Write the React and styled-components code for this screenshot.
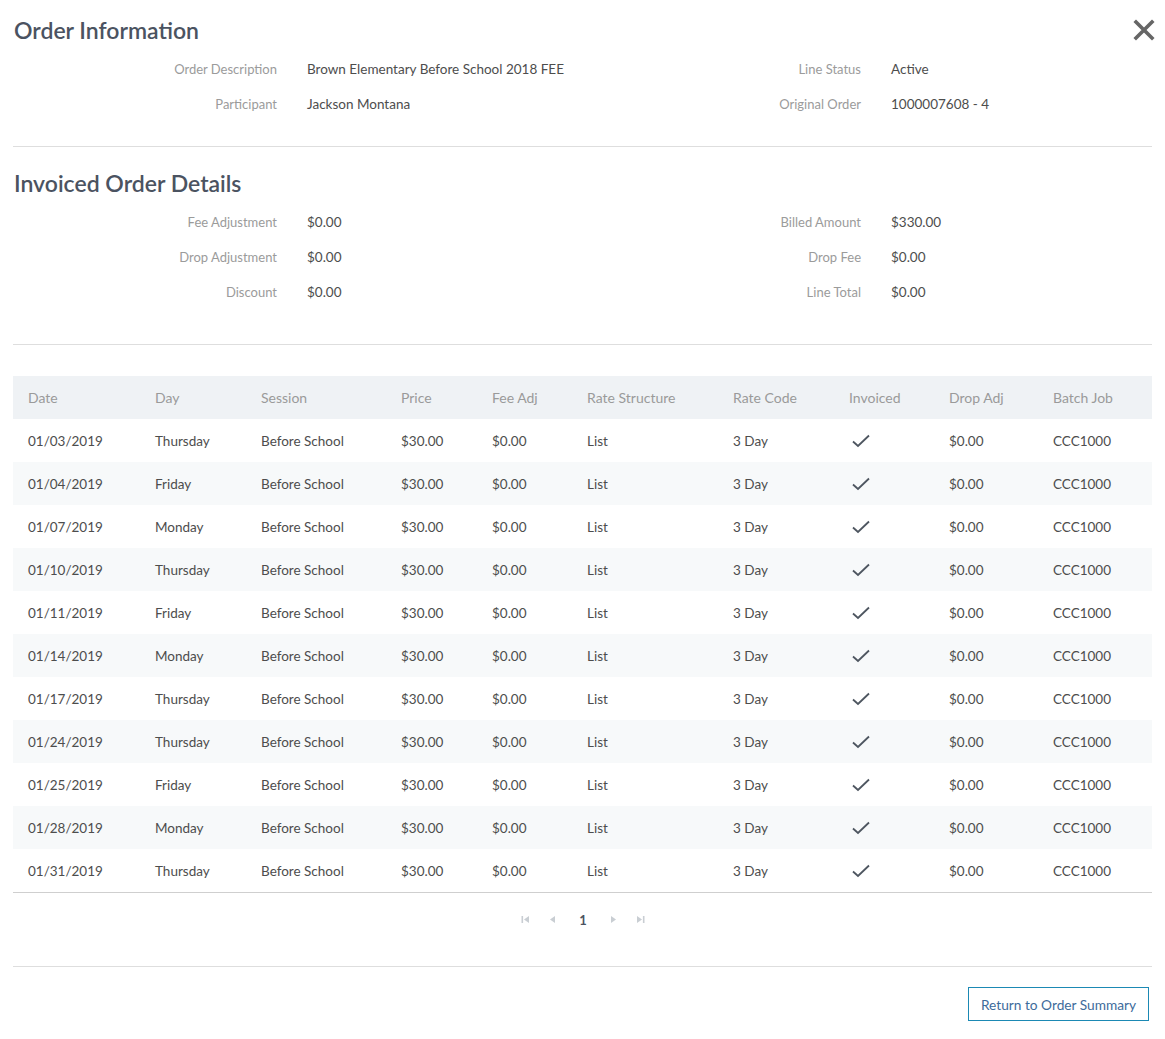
import React from 'react';
import styled, { createGlobalStyle } from 'styled-components';

const GlobalStyle = createGlobalStyle`
  body {
    margin: 0;
    background: #fff;
    font-family: Lato, "Open Sans", sans-serif;
    font-size: 14px;
    color: #4d4d4d;
  }
`;

const Page = styled.div`
  padding: 0 13px 18px;
`;

const TitleBar = styled.div`
  display: flex;
  justify-content: space-between;
  align-items: center;
  padding-top: ${p => p.top}px;
`;

const Title = styled.h2`
  margin: 0;
  font-size: 23px;
  line-height: 30px;
  font-weight: 600;
  color: #4b5361;
  padding-left: 1px;
`;

const CloseButton = styled.button`
  border: 0;
  background: none;
  padding: 0;
  margin-right: -4px;
  width: 24px;
  height: 24px;
  cursor: pointer;
  display: flex;
  align-items: center;
  justify-content: center;
`;

const InfoGrid = styled.div`
  display: grid;
  grid-template-columns: 264px 290px 234px 1fr;
  column-gap: 30px;
  grid-auto-rows: 35px;
  margin-top: ${p => p.top}px;
  align-items: center;
`;

const Label = styled.div`
  text-align: right;
  color: #9b9b9b;
  font-size: 13px;
`;

const Value = styled.div`
  color: #4d4d4d;
  font-size: 13.5px;
`;

const Divider = styled.hr`
  border: 0;
  border-top: 1px solid #dedede;
  margin: ${p => p.top}px 0 0;
`;

const Table = styled.table`
  width: 100%;
  border-collapse: collapse;
  table-layout: fixed;
  margin-top: 31px;
  border-bottom: 1px solid #cfcfcf;
`;

const Th = styled.th`
  background: #eff2f5;
  color: #9a9a9a;
  font-weight: 400;
  font-size: 14px;
  text-align: left;
  height: 43px;
  padding: 0 15px;
  white-space: nowrap;
`;

const Row = styled.tr`
  background: ${p => (p.striped ? '#f7f9fa' : '#fff')};
`;

const Td = styled.td`
  height: 43px;
  padding: 0 15px;
  font-size: 13.5px;
  color: #4d4d4d;
  white-space: nowrap;
`;

const Pager = styled.div`
  display: flex;
  justify-content: center;
  align-items: center;
  gap: 18px;
  height: 53px;
  padding-left: 1px;
`;

const PageNumber = styled.span`
  color: #4b5361;
  font-weight: 700;
  font-size: 13px;
  margin: 0 4px;
`;

const Footer = styled.div`
  display: flex;
  justify-content: flex-end;
  padding-top: 20px;
`;

const OutlineButton = styled.button`
  font-family: Lato, "Open Sans", sans-serif;
  font-size: 13.7px;
  color: #3d6b9b;
  background: #fff;
  border: 1.5px solid #1b89b4;
  height: 34px;
  width: 181px;
  margin-right: 3px;
  cursor: pointer;
`;

const CloseIcon = () => (
  <svg width="22" height="22" viewBox="0 0 22 22">
    <path d="M3 3 L19 19 M19 3 L3 19" stroke="#666" strokeWidth="3.6" strokeLinecap="square" />
  </svg>
);

const Check = () => (
  <svg width="20" height="16" viewBox="0 0 20 16" style={{ marginLeft: 2, display: 'block' }}>
    <path d="M2 8.5 L7 13 L18 2.5" fill="none" stroke="#4e5660" strokeWidth="1.8" />
  </svg>
);

const PagerIcon = ({ dir, edge }) => (
  <svg width="9" height="9" viewBox="0 0 9 9">
    <g fill="#c9ced3" transform={dir === 'right' ? 'translate(9 0) scale(-1 1)' : undefined}>
      {edge && <rect x="0.5" y="1" width="1.6" height="7" />}
      <path d={edge ? 'M8 1 L3 4.5 L8 8 Z' : 'M7 1 L2 4.5 L7 8 Z'} />
    </g>
  </svg>
);

const columns = [
  { title: 'Date', width: 127 },
  { title: 'Day', width: 106 },
  { title: 'Session', width: 140 },
  { title: 'Price', width: 91 },
  { title: 'Fee Adj', width: 95 },
  { title: 'Rate Structure', width: 146 },
  { title: 'Rate Code', width: 116 },
  { title: 'Invoiced', width: 100 },
  { title: 'Drop Adj', width: 104 },
  { title: 'Batch Job' },
];

const rows = [
  ['01/03/2019', 'Thursday'],
  ['01/04/2019', 'Friday'],
  ['01/07/2019', 'Monday'],
  ['01/10/2019', 'Thursday'],
  ['01/11/2019', 'Friday'],
  ['01/14/2019', 'Monday'],
  ['01/17/2019', 'Thursday'],
  ['01/24/2019', 'Thursday'],
  ['01/25/2019', 'Friday'],
  ['01/28/2019', 'Monday'],
  ['01/31/2019', 'Thursday'],
];

export default function App() {
  return (
    <Page>
      <GlobalStyle />
      <TitleBar top={15}>
        <Title>Order Information</Title>
        <CloseButton aria-label="Close"><CloseIcon /></CloseButton>
      </TitleBar>
      <InfoGrid top={6}>
        <Label>Order Description</Label>
        <Value>Brown Elementary Before School 2018 FEE</Value>
        <Label>Line Status</Label>
        <Value>Active</Value>
        <Label>Participant</Label>
        <Value>Jackson Montana</Value>
        <Label>Original Order</Label>
        <Value>1000007608 - 4</Value>
      </InfoGrid>
      <Divider top={25} />

      <TitleBar top={21}>
        <Title>Invoiced Order Details</Title>
      </TitleBar>
      <InfoGrid top={6}>
        <Label>Fee Adjustment</Label>
        <Value>$0.00</Value>
        <Label>Billed Amount</Label>
        <Value>$330.00</Value>
        <Label>Drop Adjustment</Label>
        <Value>$0.00</Value>
        <Label>Drop Fee</Label>
        <Value>$0.00</Value>
        <Label>Discount</Label>
        <Value>$0.00</Value>
        <Label>Line Total</Label>
        <Value>$0.00</Value>
      </InfoGrid>
      <Divider top={35} />

      <Table>
        <colgroup>
          {columns.map(c => <col key={c.title} style={c.width ? { width: c.width } : undefined} />)}
        </colgroup>
        <thead>
          <tr>
            {columns.map(c => <Th key={c.title}>{c.title}</Th>)}
          </tr>
        </thead>
        <tbody>
          {rows.map(([date, day], i) => (
            <Row key={date} striped={i % 2 === 1}>
              <Td>{date}</Td>
              <Td>{day}</Td>
              <Td>Before School</Td>
              <Td>$30.00</Td>
              <Td>$0.00</Td>
              <Td>List</Td>
              <Td>3 Day</Td>
              <Td><Check /></Td>
              <Td>$0.00</Td>
              <Td>CCC1000</Td>
            </Row>
          ))}
        </tbody>
      </Table>

      <Pager>
        <PagerIcon edge />
        <PagerIcon />
        <PageNumber>1</PageNumber>
        <PagerIcon dir="right" />
        <PagerIcon dir="right" edge />
      </Pager>
      <Divider top={20} />

      <Footer>
        <OutlineButton>Return to Order Summary</OutlineButton>
      </Footer>
    </Page>
  );
}
